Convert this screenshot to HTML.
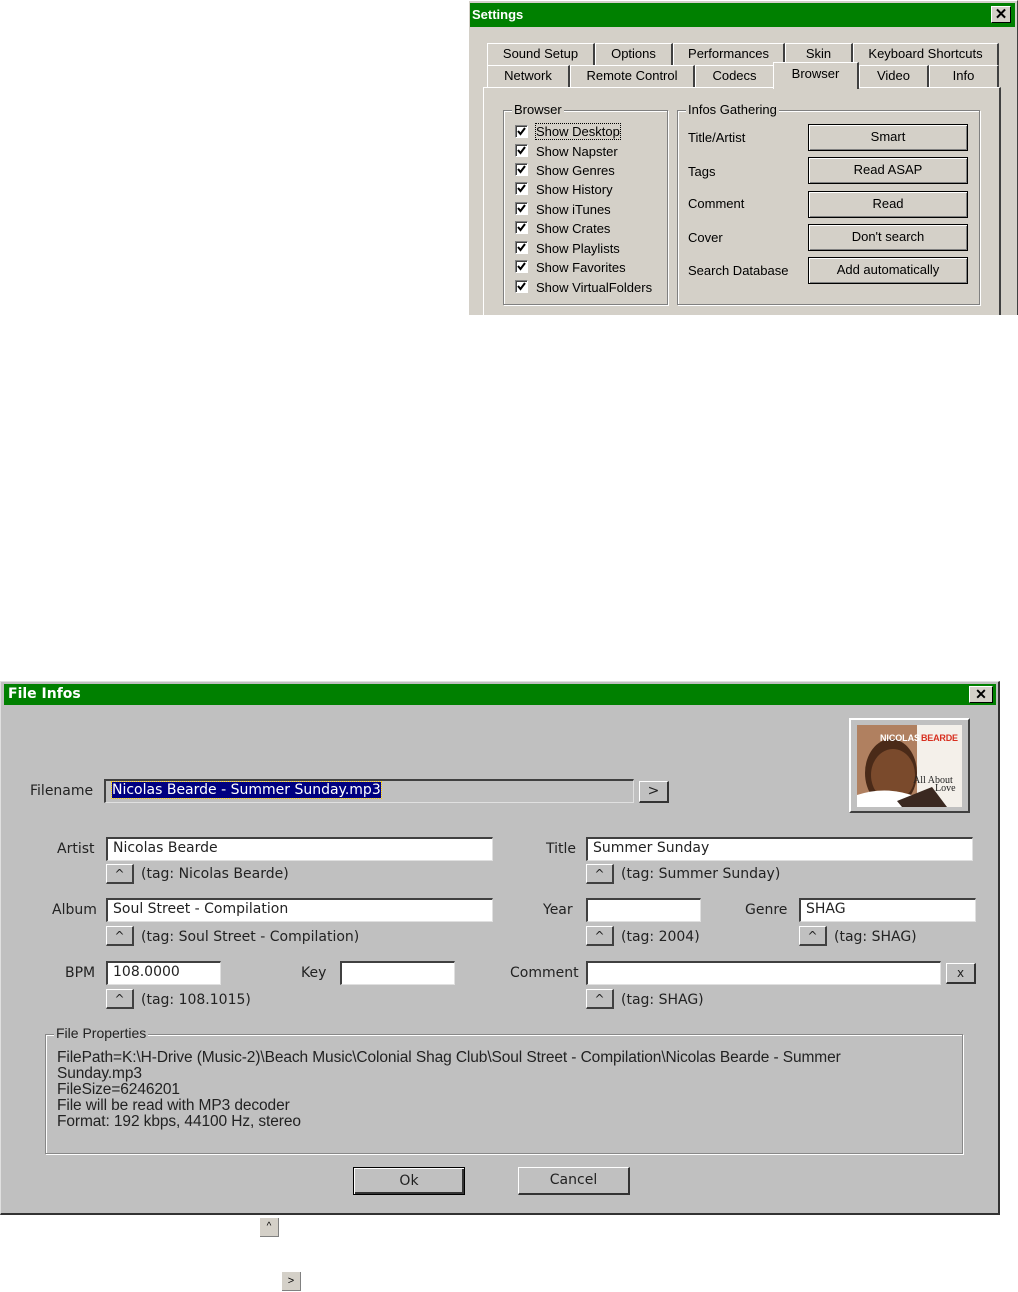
<!DOCTYPE html>
<html><head><meta charset="utf-8"><style>
*{box-sizing:border-box;margin:0;padding:0}
body{width:1018px;height:1292px;background:#fff;position:relative;overflow:hidden;font-family:"Liberation Sans",sans-serif}
.a{position:absolute}
.s{font-size:13px;color:#000;white-space:nowrap}
.f{font-family:"DejaVu Sans","Liberation Sans",sans-serif;font-size:14px;color:#222;white-space:nowrap}
.tab{position:absolute;height:22px;background:#d4d0c8;border-top:1px solid #fff;border-left:1px solid #fff;border-right:2px solid #404040;text-align:center;font-size:13px;line-height:20px}
.grp{position:absolute;border:1px solid #808080;box-shadow:1px 1px 0 #fff, inset 1px 1px 0 #fff}
.leg{position:absolute;top:-9px;left:8px;padding:0 2px;font-size:13px}
.cb{position:absolute;width:13px;height:13px;background:#fff;border-top:1px solid #808080;border-left:1px solid #808080;border-right:1px solid #fff;border-bottom:1px solid #fff;box-shadow:inset 1px 1px 0 #404040}
.cb svg{position:absolute;left:1px;top:1px}
.btn{position:absolute;background:#d4d0c8;border:1px solid #000;box-shadow:inset 1px 1px 0 #fff,inset -1px -1px 0 #808080;text-align:center;font-size:13px}
.in{position:absolute;background:#fff;border-top:2px solid #404040;border-left:2px solid #404040;border-right:1px solid #e0e0e0;border-bottom:1px solid #e0e0e0;padding-left:5px;line-height:19px}
.ub{position:absolute;width:28px;height:20px;background:#c0c0c0;border-top:1px solid #fff;border-left:1px solid #fff;border-right:2px solid #404040;border-bottom:2px solid #404040;text-align:center;font-size:12px;line-height:18px}
.fb{position:absolute;background:#c0c0c0;border-top:1px solid #fff;border-left:1px solid #fff;border-right:2px solid #333;border-bottom:2px solid #333;text-align:center;line-height:22px}
</style></head><body>

<!-- Settings window -->
<div class="a" style="left:468px;top:0;width:550px;height:315px;background:#d4d0c8;border-left:1px solid #fff;border-top:1px solid #fff;border-right:1px solid #404040;overflow:hidden">
<div class="a" style="left:14px;top:86px;width:518px;height:240px;border-left:1px solid #fff;border-top:1px solid #fff;border-right:2px solid #404040"></div>
</div>
<div class="a" style="left:470px;top:3px;width:545px;height:24px;background:#008000;color:#fff;font-weight:bold;font-size:13px;line-height:24px;padding-left:2px">Settings</div>
<div class="a" style="left:991px;top:6px;width:20px;height:17px;background:#d4d0c8;border-top:1px solid #fff;border-left:1px solid #fff;border-right:1px solid #000;border-bottom:1px solid #000;text-align:center;font-weight:bold;font-size:15px;line-height:15px">✕</div>

<div class="tab" style="left:487px;top:43px;width:108px">Sound Setup</div>
<div class="tab" style="left:595px;top:43px;width:78px">Options</div>
<div class="tab" style="left:673px;top:43px;width:112px">Performances</div>
<div class="tab" style="left:785px;top:43px;width:68px">Skin</div>
<div class="tab" style="left:853px;top:43px;width:146px">Keyboard Shortcuts</div>
<div class="tab" style="left:487px;top:65px;width:83px">Network</div>
<div class="tab" style="left:570px;top:65px;width:125px">Remote Control</div>
<div class="tab" style="left:695px;top:65px;width:80px">Codecs</div>
<div class="tab" style="left:859px;top:65px;width:70px">Video</div>
<div class="tab" style="left:929px;top:65px;width:70px">Info</div>
<div class="tab" style="left:773px;top:62px;width:86px;height:27px;border-bottom:none;line-height:22px">Browser</div>

<div class="grp" style="left:503px;top:110px;width:165px;height:195px"><span class="leg" style="background:#d4d0c8">Browser</span></div>
<div class="grp" style="left:677px;top:110px;width:303px;height:195px"><span class="leg" style="background:#d4d0c8">Infos Gathering</span></div>

<div class="cb" style="left:515px;top:125px"><svg width="9" height="9"><path d="M1 4 L3.5 7 L8 1" stroke="#000" stroke-width="2" fill="none"/></svg></div><div class="a s" style="left:536px;top:124px;outline:1px dotted #000">Show Desktop</div>
<div class="cb" style="left:515px;top:144px"><svg width="9" height="9"><path d="M1 4 L3.5 7 L8 1" stroke="#000" stroke-width="2" fill="none"/></svg></div><div class="a s" style="left:536px;top:144px">Show Napster</div>
<div class="cb" style="left:515px;top:163px"><svg width="9" height="9"><path d="M1 4 L3.5 7 L8 1" stroke="#000" stroke-width="2" fill="none"/></svg></div><div class="a s" style="left:536px;top:163px">Show Genres</div>
<div class="cb" style="left:515px;top:182px"><svg width="9" height="9"><path d="M1 4 L3.5 7 L8 1" stroke="#000" stroke-width="2" fill="none"/></svg></div><div class="a s" style="left:536px;top:182px">Show History</div>
<div class="cb" style="left:515px;top:202px"><svg width="9" height="9"><path d="M1 4 L3.5 7 L8 1" stroke="#000" stroke-width="2" fill="none"/></svg></div><div class="a s" style="left:536px;top:202px">Show iTunes</div>
<div class="cb" style="left:515px;top:221px"><svg width="9" height="9"><path d="M1 4 L3.5 7 L8 1" stroke="#000" stroke-width="2" fill="none"/></svg></div><div class="a s" style="left:536px;top:221px">Show Crates</div>
<div class="cb" style="left:515px;top:241px"><svg width="9" height="9"><path d="M1 4 L3.5 7 L8 1" stroke="#000" stroke-width="2" fill="none"/></svg></div><div class="a s" style="left:536px;top:241px">Show Playlists</div>
<div class="cb" style="left:515px;top:260px"><svg width="9" height="9"><path d="M1 4 L3.5 7 L8 1" stroke="#000" stroke-width="2" fill="none"/></svg></div><div class="a s" style="left:536px;top:260px">Show Favorites</div>
<div class="cb" style="left:515px;top:280px"><svg width="9" height="9"><path d="M1 4 L3.5 7 L8 1" stroke="#000" stroke-width="2" fill="none"/></svg></div><div class="a s" style="left:536px;top:280px">Show VirtualFolders</div>

<div class="a s" style="left:688px;top:130px">Title/Artist</div>
<div class="a s" style="left:688px;top:164px">Tags</div>
<div class="a s" style="left:688px;top:196px">Comment</div>
<div class="a s" style="left:688px;top:230px">Cover</div>
<div class="a s" style="left:688px;top:263px">Search Database</div>
<div class="btn" style="left:808px;top:124px;width:160px;height:27px;line-height:24px">Smart</div>
<div class="btn" style="left:808px;top:157px;width:160px;height:27px;line-height:24px">Read ASAP</div>
<div class="btn" style="left:808px;top:191px;width:160px;height:27px;line-height:24px">Read</div>
<div class="btn" style="left:808px;top:224px;width:160px;height:27px;line-height:24px">Don't search</div>
<div class="btn" style="left:808px;top:257px;width:160px;height:27px;line-height:24px">Add automatically</div>

<!-- File Infos window -->
<div class="a" style="left:0;top:681px;width:1000px;height:534px;background:#c0c0c0;border-top:1px solid #e0e0e0;border-left:1px solid #e0e0e0;border-right:2px solid #333;border-bottom:2px solid #333"></div>
<div class="a" style="left:4px;top:684px;width:992px;height:21px;background:#008000;color:#fff;font-weight:bold;font-family:'DejaVu Sans',sans-serif;font-size:14px;line-height:21px;padding-left:4px">File Infos</div>
<div class="a" style="left:969px;top:686px;width:24px;height:17px;background:#d4d0c8;border-top:1px solid #fff;border-left:1px solid #fff;border-right:1px solid #000;border-bottom:1px solid #000;text-align:center;font-weight:bold;font-size:14px;line-height:15px">✕</div>

<div class="a" style="left:849px;top:718px;width:121px;height:95px;background:#c0c0c0;border-top:2px solid #fff;border-left:2px solid #fff;border-right:2px solid #404040;border-bottom:2px solid #404040"></div>
<svg class="a" style="left:857px;top:725px" width="105" height="82" viewBox="0 0 105 82">
<rect width="105" height="82" fill="#f4f0ea"/>
<rect width="60" height="82" fill="#b08060"/>
<ellipse cx="34" cy="48" rx="26" ry="34" fill="#4a2a18"/>
<ellipse cx="36" cy="50" rx="22" ry="26" fill="#7a4a2c"/>
<path d="M0 70 Q30 60 60 72 L72 82 L0 82Z" fill="#fff"/>
<path d="M40 76 L75 62 L90 82 L45 82Z" fill="#3a2820"/>
<text x="23" y="16" font-family="Liberation Sans" font-weight="bold" font-size="9" fill="#fff" textLength="40">NICOLAS</text>
<text x="64" y="16" font-family="Liberation Sans" font-weight="bold" font-size="9" fill="#d83020" textLength="37">BEARDE</text>
<text x="56" y="58" font-family="Liberation Serif" font-size="10" fill="#222">All About</text>
<text x="78" y="66" font-family="Liberation Serif" font-size="10" fill="#222">Love</text>
</svg>

<div class="a f" style="left:30px;top:783px">Filename</div>
<div class="in f" style="left:104px;top:779px;width:530px;height:24px;background:#c0c0c0;padding-left:6px"><span style="background:#000080;color:#fff;outline:1px dotted #fc0">Nicolas Bearde - Summer Sunday.mp3</span></div>
<div class="fb f" style="left:639px;top:781px;width:30px;height:22px;line-height:19px">&gt;</div>

<div class="a f" style="left:57px;top:841px">Artist</div>
<div class="in f" style="left:106px;top:837px;width:387px;height:24px">Nicolas Bearde</div>
<div class="ub f" style="left:106px;top:864px">^</div><div class="a f" style="left:141px;top:866px">(tag: Nicolas Bearde)</div>

<div class="a f" style="left:546px;top:841px">Title</div>
<div class="in f" style="left:586px;top:837px;width:387px;height:24px">Summer Sunday</div>
<div class="ub f" style="left:586px;top:864px">^</div><div class="a f" style="left:621px;top:866px">(tag: Summer Sunday)</div>

<div class="a f" style="left:52px;top:902px">Album</div>
<div class="in f" style="left:106px;top:898px;width:387px;height:24px">Soul Street - Compilation</div>
<div class="ub f" style="left:106px;top:926px">^</div><div class="a f" style="left:141px;top:929px">(tag: Soul Street - Compilation)</div>

<div class="a f" style="left:543px;top:902px">Year</div>
<div class="in f" style="left:586px;top:898px;width:115px;height:24px"></div>
<div class="ub f" style="left:586px;top:926px">^</div><div class="a f" style="left:621px;top:929px">(tag: 2004)</div>

<div class="a f" style="left:745px;top:902px">Genre</div>
<div class="in f" style="left:799px;top:898px;width:177px;height:24px">SHAG</div>
<div class="ub f" style="left:799px;top:926px">^</div><div class="a f" style="left:834px;top:929px">(tag: SHAG)</div>

<div class="a f" style="left:65px;top:965px">BPM</div>
<div class="in f" style="left:106px;top:961px;width:115px;height:24px">108.0000</div>
<div class="ub f" style="left:106px;top:989px">^</div><div class="a f" style="left:141px;top:992px">(tag: 108.1015)</div>

<div class="a f" style="left:301px;top:965px">Key</div>
<div class="in f" style="left:340px;top:961px;width:115px;height:24px"></div>

<div class="a f" style="left:510px;top:965px">Comment</div>
<div class="in f" style="left:586px;top:961px;width:355px;height:24px"></div>
<div class="fb f" style="left:946px;top:963px;width:30px;height:21px;line-height:19px;font-size:12px">x</div>
<div class="ub f" style="left:586px;top:989px">^</div><div class="a f" style="left:621px;top:992px">(tag: SHAG)</div>

<div class="grp" style="left:45px;top:1034px;width:918px;height:120px;border-color:#888"><span class="leg" style="background:#c0c0c0;font-size:14px;top:-10px;left:8px;color:#222">File Properties</span></div>
<div class="a" style="left:57px;top:1050px;font-family:'Liberation Sans',sans-serif;font-size:15.5px;line-height:16px;color:#222;white-space:pre;letter-spacing:-0.1px">FilePath=K:\H-Drive (Music-2)\Beach Music\Colonial Shag Club\Soul Street - Compilation\Nicolas Bearde - Summer
Sunday.mp3
FileSize=6246201
File will be read with MP3 decoder
Format: 192 kbps, 44100 Hz, stereo</div>

<div class="a f" style="left:353px;top:1167px;width:112px;height:28px;border:1px solid #000;box-shadow:inset 1px 1px 0 #fff,inset -2px -2px 0 #333;background:#c0c0c0;text-align:center;line-height:26px">Ok</div>
<div class="fb f" style="left:518px;top:1167px;width:112px;height:28px;line-height:25px">Cancel</div>

<div class="a" style="left:260px;top:1218px;width:19px;height:19px;background:#d4d0c8;border-right:1px solid #808080;border-bottom:1px solid #808080;font-size:10px;text-align:center;line-height:18px">^</div>
<div class="a" style="left:282px;top:1272px;width:19px;height:19px;background:#d4d0c8;border-right:1px solid #808080;border-bottom:1px solid #808080;font-size:11px;text-align:center;line-height:18px">&gt;</div>
</body></html>
